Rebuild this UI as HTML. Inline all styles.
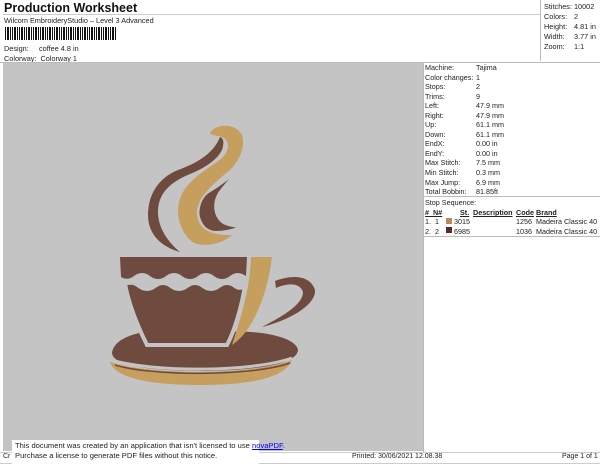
<!DOCTYPE html>
<html><head><meta charset="utf-8"><style>
body{margin:0;width:600px;height:464px;background:#fff;font-family:"Liberation Sans",sans-serif;position:relative;overflow:hidden;color:#222}
.a{position:absolute;white-space:nowrap}
.s{font-size:7px}
</style></head><body>
<div class="a" style="left:4px;top:1px;font-size:12.5px;font-weight:bold;color:#111">Production Worksheet</div>
<div class="a s" style="left:4px;top:16px;font-size:7.3px">Wilcom EmbroideryStudio – Level 3 Advanced</div>
<div class="a" style="left:5px;top:27px;width:112px;height:13px;background:repeating-linear-gradient(90deg,#111 0 1px,#fff 1px 2px,#111 2px 4px,#fff 4px 5px,#111 5px 6px,#fff 6px 7px)"></div>
<div class="a s" style="left:4px;top:44px;font-size:7.3px">Design:</div><div class="a s" style="left:39px;top:44px;font-size:7.3px">coffee 4.8 in</div>
<div class="a s" style="left:4px;top:54px;font-size:7.3px">Colorway:&nbsp; Colorway 1</div>
<div class="a" style="left:3px;top:14px;width:537px;border-top:1px solid #ccc"></div>
<div class="a" style="left:540px;top:0;width:59px;height:61px;border-left:1px solid #bbb;border-right:1px solid #bbb"></div>
<div class="a" style="left:0;top:62px;width:600px;border-top:1px solid #bbb"></div>
<div class="a s" style="left:544px;top:2px;line-height:10px;font-size:7.3px">Stitches:<br>Colors:<br>Height:<br>Width:<br>Zoom:</div>
<div class="a s" style="left:574px;top:2px;line-height:10px;font-size:7.3px">10002<br>2<br>4.81 in<br>3.77 in<br>1:1</div>
<div class="a" style="left:3px;top:63px;width:420px;height:388px;background:#c4c4c4"></div>
<div class="a" style="left:423px;top:63px;width:0;height:389px;border-left:1px solid #bbb"></div>
<div class="a s" style="left:425px;top:63px;line-height:9.55px;font-size:7.2px">Machine:<br>Color changes:<br>Stops:<br>Trims:<br>Left:<br>Right:<br>Up:<br>Down:<br>EndX:<br>EndY:<br>Max Stitch:<br>Min Stitch:<br>Max Jump:<br>Total Bobbin:</div>
<div class="a s" style="left:476px;top:63px;line-height:9.55px;font-size:7.2px">Tajima<br>1<br>2<br>9<br>47.9 mm<br>47.9 mm<br>61.1 mm<br>61.1 mm<br>0.00 in<br>0.00 in<br>7.5 mm<br>0.3 mm<br>6.9 mm<br>81.85ft</div>
<div class="a" style="left:424px;top:196px;width:176px;border-top:1px solid #bbb"></div>
<div class="a s" style="left:425px;top:198px;font-size:7.2px">Stop Sequence:</div>
<div class="a s" style="left:425px;top:208px;font-size:7.2px;font-weight:bold;text-decoration:underline">#&nbsp; N#</div>
<div class="a s" style="left:460px;top:208px;font-size:7.2px;font-weight:bold;text-decoration:underline">St.</div>
<div class="a s" style="left:473px;top:208px;font-size:7.2px;font-weight:bold;text-decoration:underline">Description</div>
<div class="a s" style="left:516px;top:208px;font-size:7.2px;font-weight:bold;text-decoration:underline">Code</div>
<div class="a s" style="left:536px;top:208px;font-size:7.2px;font-weight:bold;text-decoration:underline">Brand</div>
<div class="a s" style="left:425px;top:217px;line-height:9.5px;font-size:7.2px">1.&nbsp; 1<br>2.&nbsp; 2</div>
<div class="a" style="left:446px;top:218px;width:6px;height:6px;background:#b98a5c"></div>
<div class="a" style="left:446px;top:227px;width:6px;height:6px;background:#5a2a2a"></div>
<div class="a s" style="left:454px;top:217px;line-height:9.5px;font-size:7.2px">3015<br>6985</div>
<div class="a s" style="left:516px;top:217px;line-height:9.5px;font-size:7.2px">1256&nbsp; Madeira Classic 40<br>1036&nbsp; Madeira Classic 40</div>
<div class="a" style="left:424px;top:236px;width:176px;border-top:1px solid #bbb"></div>
<svg class="a" style="left:0;top:0" width="600" height="464">
<g fill="#6f4b3f">
<path d="M143 332 L228 332 C260 330 296 337 298 350 C297 364 260 370 205 371 C150 371 113 366 112 353 C114 340 130 335 143 332 Z"/>
</g>
<path d="M125 284 C130 282 134 282 139 286 C144 290 150 290 155 286 C160 282 166 282 171 286 C176 290 182 290 187 286 C192 282 198 282 203 286 C208 290 214 290 219 286 C224 282 230 282 235 286 C239 289 243 288 245 285 C242 305 235 330 227 345 L147 345 C137 325 129 305 125 284 Z" fill="#6f4b3f" stroke="#c4c4c4" stroke-width="4"/>
<g fill="#6f4b3f">
<path d="M120 257 L247 257 L246 276 C240 272 235 272 230 276 C225 280 219 280 214 276 C209 272 203 272 198 276 C193 280 187 280 182 276 C177 272 171 272 166 276 C161 280 155 280 150 276 C145 272 139 272 134 276 C129 280 124 279 121 277 Z"/>
<path d="M275 281 C290 275 310 274 315 290 C316 305 290 320 262 327 C285 315 303 304 303 292 C300 282 287 283 276 288 Z"/>
<path d="M220 137 C214 152 200 162 178 170 C158 178 148 195 148 215 C148 235 162 247 180 252 C168 242 158 228 158 212 C158 195 168 183 190 174 C210 166 222 155 223 146 C224 141 223 138 220 137 Z"/>
</g>
<path d="M210 133 C215 124 235 122 242 135 C246 148 238 162 230 170 C215 182 200 195 197 210 C196 225 205 236 232 235 C220 246 198 248 190 240 C178 228 175 210 181 196 C189 178 210 168 222 158 C230 150 230 140 222 137 C216 135 212 136 210 133Z" fill="#c69e5e"/>
<path d="M239 165 C232 178 218 186 207 193 C198 201 197 214 200 220 C203 228 208 231 215 232 C225 232 233 230 240 227 C232 226 226 225 222 222 C214 215 213 203 219 193 C226 183 236 174 239 165 Z" fill="#6f4b3f" stroke="#c4c4c4" stroke-width="2"/>
<g fill="#c69e5e">
<path d="M251 257 L272 257 C268 290 255 330 232 345 C240 320 250 290 251 257 Z"/>
<path d="M110 362 C150 375 250 376 292 360 C285 378 250 385 200 385 C150 385 115 378 110 362 Z"/>
</g>
<path d="M112 360 C150 372 250 373 292 358" stroke="#c4c4c4" stroke-width="3" fill="none"/>
<path d="M115 365 C150 376 250 377 290 363" stroke="#6f4b3f" stroke-width="1.5" fill="none"/>
</svg>
<div class="a" style="left:0;top:452px;width:600px;height:10px;border-top:1px solid #ccc;border-bottom:1px solid #ccc"></div>
<div class="a s" style="left:3px;top:453px;font-size:7px">Cr</div>
<div class="a s" style="left:352px;top:453px;font-size:7px">Printed: 30/06/2021 12.08.38</div>
<div class="a s" style="left:562px;top:453px;font-size:7px">Page 1 of 1</div>
<div class="a" style="left:12px;top:440px;width:247px;height:24px;background:#fff"></div>
<div class="a" style="left:15px;top:441px;font-size:7.6px;line-height:10px">This document was created by an application that isn't licensed to use <span style="color:#00f;text-decoration:underline">novaPDF</span>.<br>Purchase a license to generate PDF files without this notice.</div>
</body></html>
